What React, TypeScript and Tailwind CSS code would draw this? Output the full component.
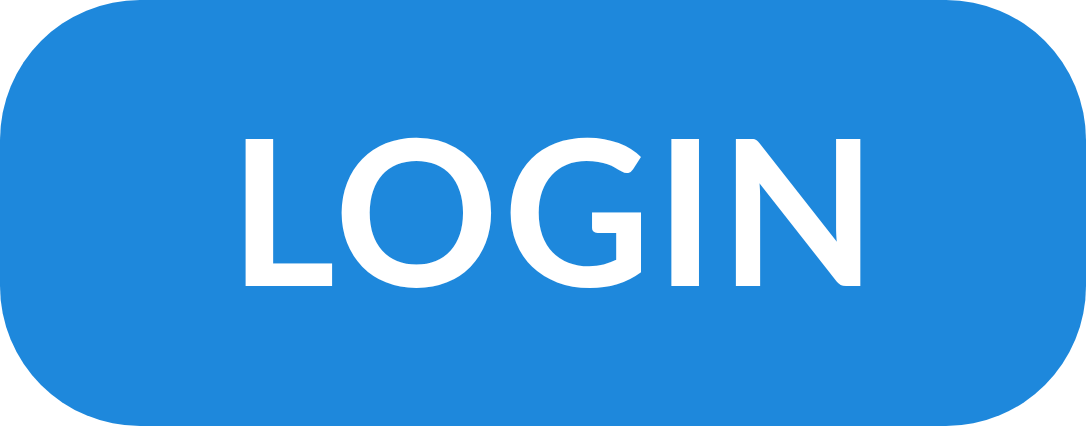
export default function App() {
  return (
    <div className="h-[426px] w-[1086px] bg-white">
      <button className="flex h-full w-full items-center justify-center rounded-[140px] bg-[#1e88dc] pb-[13px] pl-[24px] text-white">
        <span className="font-['Lato',sans-serif] text-[204px] font-bold leading-none tracking-[4px]">LOGIN</span>
      </button>
    </div>
  )
}
